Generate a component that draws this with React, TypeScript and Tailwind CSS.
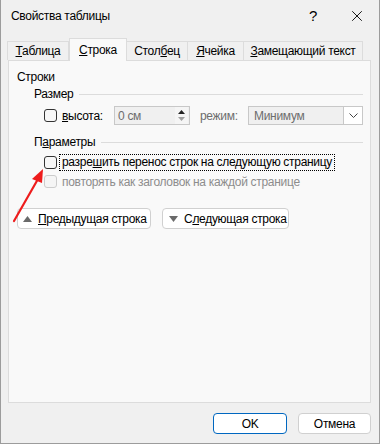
import { X } from 'lucide-react';

const font = { fontFamily: '"Liberation Sans", "Noto Sans", sans-serif' };

function Tab({ children, active, w }: { children: React.ReactNode; active?: boolean; w: string }) {
  if (active) {
    return (
      <div className={`${w} h-[23px] -mb-px relative z-10 flex items-center justify-center bg-[#f9f9f9] border border-b-0 border-[#dcdcdc] text-black`}>
        {children}
      </div>
    );
  }
  return (
    <div className={`${w} h-[19px] flex items-center justify-center bg-[#f0f0f0] border border-b-0 border-[#dcdcdc] -ml-px first:ml-0 text-black`}>
      {children}
    </div>
  );
}

function Check({ disabled }: { disabled?: boolean }) {
  return (
    <div
      className={`w-[13px] h-[13px] shrink-0 rounded-[3px] border ${disabled ? 'border-[#cccccc] bg-[#f5f5f5]' : 'border-[#333333] bg-[#f7f7f7]'}`}
    />
  );
}

export default function App() {
  return (
    <div className="w-[380px] h-[444px] bg-[#f0f0f0] border-x border-b border-[#9c9c9c] flex flex-col text-[12px] tracking-[-0.3px] text-black relative overflow-hidden whitespace-nowrap" style={font}>
      {/* title bar */}
      <div className="h-[32px] flex items-center pl-[10px] shrink-0">
        <span className="flex-1">Свойства таблицы</span>
        <span className="w-[20px] text-center text-[15px] mr-[25px]">?</span>
        <X size={18} strokeWidth={1.2} className="mr-[13px]" />
      </div>

      {/* tabs */}
      <div className="h-[28px] flex items-end pl-[6px] shrink-0">
        <Tab w="w-[62px]"><span><u>Т</u>аблица</span></Tab>
        <Tab w="w-[58px]" active><span><u>С</u>трока</span></Tab>
        <Tab w="w-[62px]"><span>Стол<u>б</u>ец</span></Tab>
        <Tab w="w-[57px]"><span><u>Я</u>чейка</span></Tab>
        <Tab w="w-[120px]"><span><u>З</u>амещающий текст</span></Tab>
      </div>

      {/* panel */}
      <div className="mx-[7px] mr-[8px] h-[343px] bg-[#f9f9f9] border border-[#dcdcdc] shrink-0 flex flex-col pl-[8px] pr-[7px]">
        <div className="h-[16px] mt-[8px] flex items-center">Строки</div>

        <div className="h-[16px] mt-[1px] flex items-center pl-[17px] gap-[6px]">
          <span>Размер</span>
          <div className="flex-1 h-px bg-[#dcdcdc]" />
        </div>

        {/* height row */}
        <div className="h-[19px] mt-[4px] flex items-center pl-[27px]">
          <Check />
          <span className="ml-[5px] w-[52px]"><u>в</u>ысота:</span>
          <div className="w-[76px] h-[19px] border border-[#c8c8c8] bg-[#f0f0f0] flex items-center">
            <span className="flex-1 pl-[3px] text-[#6d6d6d]">0 см</span>
            <div className="w-[13px] h-full flex flex-col items-center justify-center gap-[3px] bg-[#f5f5f5] mr-px">
              <svg className="shrink-0" width="7" height="4" viewBox="0 0 7 4"><path d="M0 4 L3.5 0 L7 4 Z" fill="#222" /></svg>
              <svg className="shrink-0" width="7" height="4" viewBox="0 0 7 4"><path d="M0 0 L3.5 4 L7 0 Z" fill="#a0a0a0" /></svg>
            </div>
          </div>
          <span className="ml-[10px] w-[48px] text-[#6d6d6d]">режим:</span>
          <div className="flex-1 h-[19px] border border-[#c8c8c8] bg-[#f0f0f0] flex items-center">
            <span className="flex-1 pl-[5px] text-[#6d6d6d]">Минимум</span>
            <div className="w-[19px] h-full bg-white border-l border-[#c8c8c8] flex items-center justify-center">
              <svg className="shrink-0" width="9" height="5" viewBox="0 0 9 5"><path d="M0.5 0.5 L4.5 4.5 L8.5 0.5" fill="none" stroke="#444" strokeWidth="1" /></svg>
            </div>
          </div>
        </div>

        <div className="h-[16px] mt-[9px] flex items-center pl-[17px] gap-[6px]">
          <span>П<u>а</u>раметры</span>
          <div className="flex-1 h-px bg-[#dcdcdc]" />
        </div>

        <div className="h-[17px] mt-[4px] flex items-center pl-[27px]">
          <Check />
          <span className="ml-[2px] px-[2px] border border-dotted border-black leading-[15px]">разре<u>ш</u>ить перенос строк на следующую страницу</span>
        </div>
        <div className="h-[17px] mt-[2px] flex items-center pl-[27px]">
          <Check disabled />
          <span className="ml-[5px] text-[#8d8d8d]">повторять как заголовок на каждой странице</span>
        </div>

        <div className="mt-[18px] flex gap-[11px]">
          <div className="w-[134px] h-[21px] bg-white border border-[#d0d0d0] rounded-[4px] flex items-center pl-[5px] gap-[6px]">
            <svg className="shrink-0" width="9" height="6" viewBox="0 0 9 6"><path d="M0 6 L4.5 0 L9 6 Z" fill="#6a6a6a" /></svg>
            <span><u>П</u>редыдущая строка</span>
          </div>
          <div className="w-[127px] h-[21px] bg-white border border-[#d0d0d0] rounded-[4px] flex items-center pl-[6px] gap-[6px]">
            <svg className="shrink-0" width="9" height="6" viewBox="0 0 9 6"><path d="M0 0 L4.5 6 L9 0 Z" fill="#6a6a6a" /></svg>
            <span>С<u>л</u>едующая строка</span>
          </div>
        </div>
      </div>

      {/* footer */}
      <div className="flex justify-end gap-[11px] pr-[8px] mt-[10px]">
        <div className="w-[74px] h-[21px] bg-white border-[1.5px] border-[#0067c0] rounded-[4px] flex items-center justify-center">OK</div>
        <div className="w-[73px] h-[21px] bg-white border border-[#d0d0d0] rounded-[4px] flex items-center justify-center">Отмена</div>
      </div>

      {/* red annotation arrow */}
      <svg className="absolute left-0 top-0 pointer-events-none" width="380" height="444">
        <line x1="13" y1="221" x2="37" y2="179" stroke="#ee1c1c" strokeWidth="2.2" strokeLinecap="round" />
        <path d="M42 169 L31 179 L41 183 Z" fill="#ee1c1c" />
      </svg>
    </div>
  );
}
